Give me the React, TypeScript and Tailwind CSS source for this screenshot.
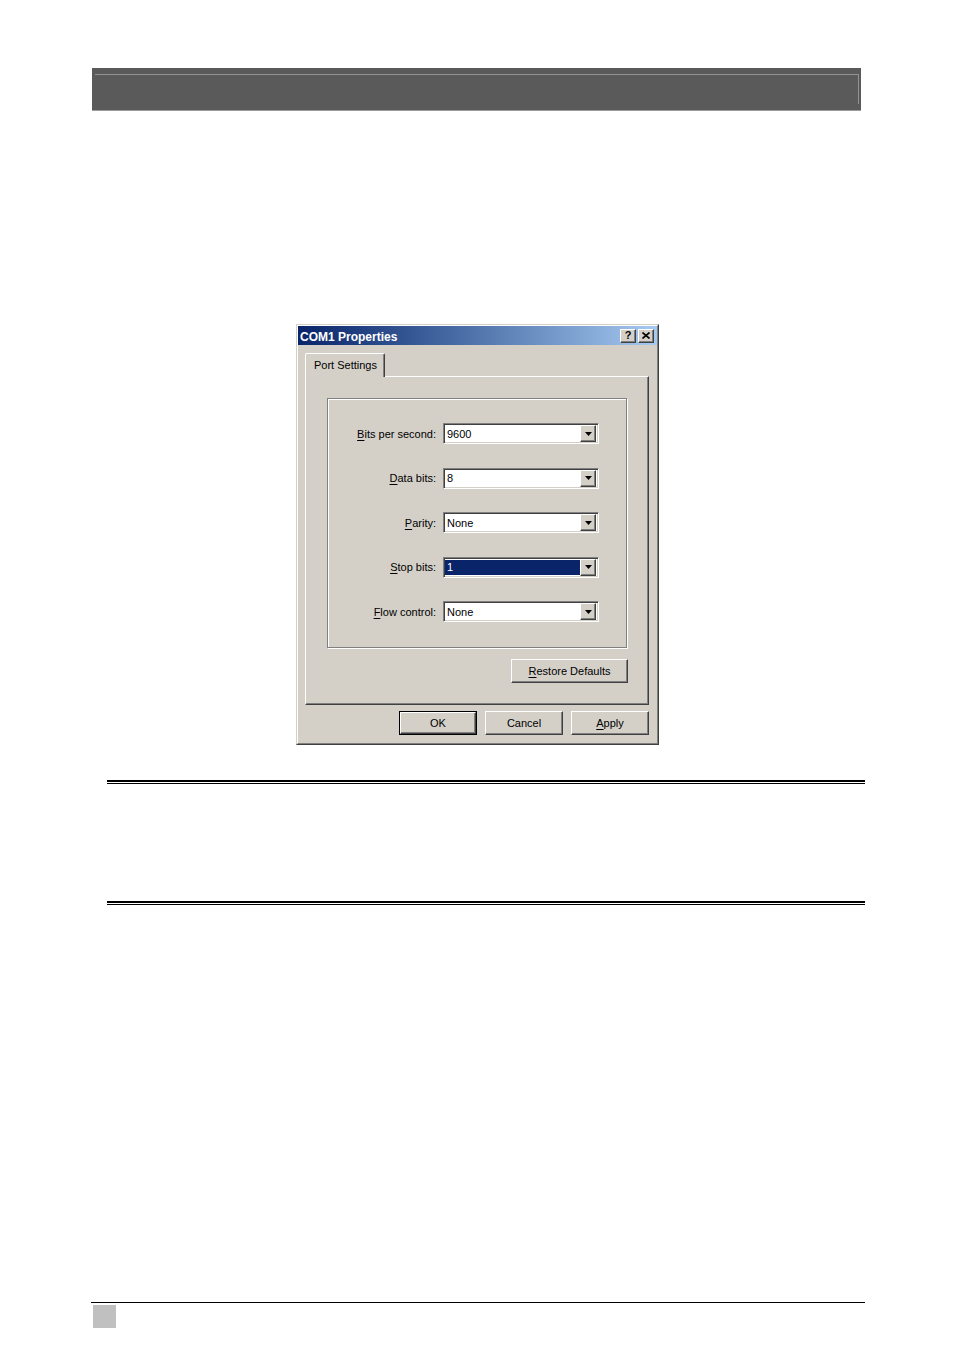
import React from 'react';

const raised =
  'border border-t-white border-l-white border-r-[#404040] border-b-[#404040] shadow-[inset_-1px_-1px_0_#808080]';

/** Letter with the Windows access-key underline. */
function Key({ k, rest }: { k: string; rest: string }) {
  return (
    <span>
      <span className="underline underline-offset-[2px]">{k}</span>
      {rest}
    </span>
  );
}

function DropButton() {
  return (
    <div className={`w-[16px] h-[17px] bg-[#d4d0c8] flex items-center justify-center ${raised}`}>
      <svg width="7" height="4" viewBox="0 0 7 4">
        <path d="M0 0h7L3.5 4z" fill="#000" />
      </svg>
    </div>
  );
}

interface ComboProps {
  value: string;
  selected?: boolean;
}

function Combo({ value, selected }: ComboProps) {
  return (
    <div className="w-[156px] h-[21px] bg-white border border-t-[#808080] border-l-[#808080] border-r-white border-b-white shadow-[inset_1px_1px_0_#404040,inset_-1px_-1px_0_#d4d0c8] flex items-center pl-[1px] pr-[2px]">
      <div className={`flex-1 h-[15px] flex items-center pl-[2px] pt-[1px] ${selected ? 'bg-[#0a246a] text-white' : 'text-black'}`}>
        {value}
      </div>
      <DropButton />
    </div>
  );
}

const rows: { label: React.ReactNode; value: string; selected?: boolean }[] = [
  { label: <Key k="B" rest="its per second:" />, value: '9600' },
  { label: <Key k="D" rest="ata bits:" />, value: '8' },
  { label: <Key k="P" rest="arity:" />, value: 'None' },
  { label: <Key k="S" rest="top bits:" />, value: '1', selected: true },
  { label: <Key k="F" rest="low control:" />, value: 'None' },
];

function PushButton({ children, isDefault, className = '' }: { children: React.ReactNode; isDefault?: boolean; className?: string }) {
  if (isDefault) {
    return (
      <div className={`w-[78px] h-[24px] border border-black ${className}`}>
        <div className={`w-full h-full bg-[#d4d0c8] flex items-center justify-center pt-[1px] ${raised}`}>{children}</div>
      </div>
    );
  }
  return (
    <div className={`w-[78px] h-[24px] bg-[#d4d0c8] flex items-center justify-center pt-[1px] ${raised} ${className}`}>
      {children}
    </div>
  );
}

function CaptionButton({ children }: { children: React.ReactNode }) {
  return (
    <div className={`w-[16px] h-[14px] bg-[#d4d0c8] flex items-center justify-center ${raised}`}>{children}</div>
  );
}

/** Windows 2000 "COM1 Properties" dialog. */
function ComDialog() {
  return (
    <div className="ml-[296px] w-[363px] h-[421px] border border-t-[#d4d0c8] border-l-[#d4d0c8] border-r-[#404040] border-b-[#404040] bg-[#d4d0c8] text-[11px] leading-none text-black font-['Liberation_Sans',Arial,sans-serif]">
      <div className="h-full border border-t-white border-l-white border-r-[#808080] border-b-[#808080] flex flex-col">
        {/* Title bar */}
        <div className="h-[19px] bg-gradient-to-r from-[#0a246a] to-[#a6caf0] flex items-center pl-[2px] pr-[3px] pt-[2px]">
          <span className="flex-1 font-bold text-white text-[12px]">COM1 Properties</span>
          <div className="flex gap-[2px] -mt-[2px]">
            <CaptionButton>
              <span className="font-bold text-[11px] -mt-[1px]">?</span>
            </CaptionButton>
            <CaptionButton>
              <svg width="8" height="7" viewBox="0 0 8 7">
                <path d="M0.5 0.5L7.5 6.5M7.5 0.5L0.5 6.5" stroke="#000" strokeWidth="1.6" />
              </svg>
            </CaptionButton>
          </div>
        </div>

        <div className="pt-[8px] pl-[7px] pr-[8px] flex flex-col">
          {/* Tab strip */}
          <div className="flex">
            <div className="relative z-10 -mb-[1px] w-[80px] h-[24px] bg-[#d4d0c8] border-t border-l border-white border-r border-r-[#404040] shadow-[inset_-1px_0_0_#808080] rounded-t-[2px] flex items-center pl-[8px]">
              Port Settings
            </div>
          </div>

          {/* Tab panel */}
          <div className="h-[329px] border border-t-white border-l-white border-r-[#404040] border-b-[#404040] shadow-[inset_-1px_-1px_0_#808080] pt-[21px] pl-[21px] pr-[21px] flex flex-col">
            <div className="w-[300px] h-[250px] border border-[#808080] shadow-[inset_1px_1px_0_#fff,1px_1px_0_#fff] pt-[24px] flex flex-col gap-[23.5px]">
              {rows.map((r, i) => (
                <div key={i} className="flex items-center">
                  <div className="w-[108px] text-right pt-[1px]">{r.label}</div>
                  <div className="ml-[7px]">
                    <Combo value={r.value} selected={r.selected} />
                  </div>
                </div>
              ))}
            </div>
            <div className="mt-[11px] flex justify-end mr-[-1px]">
              <div className={`w-[117px] h-[24px] bg-[#d4d0c8] flex items-center justify-center pt-[1px] ${raised}`}>
                <Key k="R" rest="estore Defaults" />
              </div>
            </div>
          </div>

          {/* Dialog buttons */}
          <div className="mt-[6px] flex justify-end gap-[8px]">
            <PushButton isDefault>OK</PushButton>
            <PushButton>Cancel</PushButton>
            <PushButton>
              <Key k="A" rest="pply" />
            </PushButton>
          </div>
        </div>
      </div>
    </div>
  );
}

function DoubleRule({ className = '' }: { className?: string }) {
  return (
    <div className={`ml-[107px] w-[758px] ${className}`}>
      <div className="h-[2px] bg-black" />
      <div className="h-[1px]" />
      <div className="h-[1px] bg-black" />
    </div>
  );
}

export default function App() {
  return (
    <div className="w-[954px] h-[1350px] bg-white flex flex-col">
      {/* Section header bar */}
      <div className="mt-[68px] ml-[92px] w-[769px] h-[43px] bg-[#5a5a5a] border-b border-[#9c9c9c] pt-[6px] pl-[3px] pr-[2px]">
        <div className="h-[30px] border-t border-r border-[#929292]" />
      </div>

      <div className="mt-[213px]">
        <ComDialog />
      </div>

      <DoubleRule className="mt-[35px]" />
      <DoubleRule className="mt-[117px]" />

      {/* Footer */}
      <div className="mt-[397px] ml-[91px] w-[774px] h-[1px] bg-black" />
      <div className="mt-[2px] ml-[93px] w-[23px] h-[23px] bg-[#c0c0c0]" />
    </div>
  );
}
